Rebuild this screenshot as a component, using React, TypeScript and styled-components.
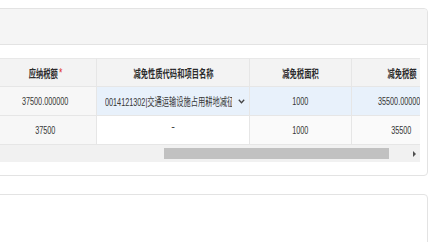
import React from "react";
import styled, { createGlobalStyle } from "styled-components";

const GlobalStyle = createGlobalStyle`
  html, body { margin: 0; padding: 0; background: #fff; overflow: hidden; }
  body { font-family: "Liberation Sans", "Noto Sans CJK SC", sans-serif; }
  * { box-sizing: border-box; }
`;

const Page = styled.div`
  width: 441px;
  margin-left: -13px;
  padding-top: 8px;
  display: flex;
  flex-direction: column;
  gap: 18px;
`;

const Panel = styled.section`
  border: 1px solid #e3e3e3;
  border-radius: 4px;
  background: #fff;
`;

const PanelHead = styled.div`
  height: 36px;
  background: #f5f5f5;
  border-bottom: 1px solid #e3e3e3;
  border-radius: 4px 4px 0 0;
`;

const PanelBody = styled.div<{ $h?: number }>`
  padding: 13px 7px 13px 7px;
  min-height: ${(p) => p.$h ?? 0}px;
`;

const TableView = styled.div`
  width: 425px;
  overflow: hidden;
`;

const Grid = styled.div`
  display: grid;
  grid-template-columns: 102px 153px 102px 100px;
  width: 457px;
`;

const Cell = styled.div<{ $bg?: string; $head?: boolean }>`
  height: 29px;
  display: flex;
  align-items: center;
  justify-content: center;
  overflow: hidden;
  background: ${(p) => p.$bg ?? "#fff"};
  border-right: 1px solid #e6e6e6;
  border-bottom: 1px solid #e6e6e6;
  border-top: ${(p) => (p.$head ? "1px solid #e8e8e8" : "none")};
  font-size: 11px;
  color: ${(p) => (p.$head ? "#2b2b2b" : "#363636")};
  font-weight: ${(p) => (p.$head ? "bold" : "normal")};
  white-space: nowrap;
`;

const Txt = styled.span<{ $origin?: string }>`
  display: inline-block;
  transform: scaleX(0.66);
  transform-origin: ${(p) => p.$origin ?? "center"};
  white-space: nowrap;
`;

const Star = styled.span`
  color: #e02a2a;
  font-size: 13px;
  font-weight: normal;
  margin-left: 2px;
  position: relative;
  top: -1px;
`;

const SelectCell = styled(Cell)`
  justify-content: flex-start;
  padding: 0 4px 0 8px;
  gap: 6px;
`;

const SelectText = styled.div`
  flex: 1;
  overflow: hidden;
  font-weight: normal;
`;

const Dash = styled.span`
  position: relative;
  top: -4px;
`;

const ScrollBar = styled.div`
  height: 17px;
  background: #f1f1f1;
  display: flex;
  align-items: center;
`;

const Thumb = styled.div`
  margin-left: 169px;
  width: 225px;
  height: 11px;
  background: #c1c1c1;
`;

const Arrow = styled.div`
  margin-left: auto;
  margin-right: 4px;
  width: 0;
  height: 0;
  border-top: 3px solid transparent;
  border-bottom: 3px solid transparent;
  border-left: 3px solid #505050;
`;

const Chevron = () => (
  <svg width="7" height="5" viewBox="0 0 7 5">
    <polyline points="0.8,0.8 3.5,3.8 6.2,0.8" fill="none" stroke="#444" strokeWidth="1.3" />
  </svg>
);

const GRAY = "#f7f7f7";
const HEAD = "#f3f3f3";
const BLUE = "#e8f1fb";
const LIGHT = "#fafafa";

export default function App() {
  return (
    <>
      <GlobalStyle />
      <Page>
        <Panel>
          <PanelHead />
          <PanelBody>
            <TableView>
              <Grid>
                <Cell $head $bg={HEAD}>
                  <Txt>应纳税额<Star>*</Star></Txt>
                </Cell>
                <Cell $head $bg={HEAD}>
                  <Txt>减免性质代码和项目名称</Txt>
                </Cell>
                <Cell $head $bg={HEAD}>
                  <Txt>减免税面积</Txt>
                </Cell>
                <Cell $head $bg={HEAD}>
                  <Txt>减免税额</Txt>
                </Cell>

                <Cell $bg={GRAY}>
                  <Txt>37500.000000</Txt>
                </Cell>
                <SelectCell $bg={BLUE}>
                  <SelectText>
                    <Txt $origin="left">0014121302|交通运输设施占用耕地减征耕地占用税</Txt>
                  </SelectText>
                  <Chevron />
                </SelectCell>
                <Cell $bg={BLUE}>
                  <Txt>1000</Txt>
                </Cell>
                <Cell $bg={BLUE}>
                  <Txt>35500.000000</Txt>
                </Cell>

                <Cell $bg={GRAY}>
                  <Txt>37500</Txt>
                </Cell>
                <Cell $bg="#fff">
                  <Dash>-</Dash>
                </Cell>
                <Cell $bg={LIGHT}>
                  <Txt>1000</Txt>
                </Cell>
                <Cell $bg={LIGHT}>
                  <Txt>35500</Txt>
                </Cell>
              </Grid>
              <ScrollBar>
                <Thumb />
                <Arrow />
              </ScrollBar>
            </TableView>
          </PanelBody>
        </Panel>
        <Panel>
          <PanelBody $h={80} />
        </Panel>
      </Page>
    </>
  );
}
